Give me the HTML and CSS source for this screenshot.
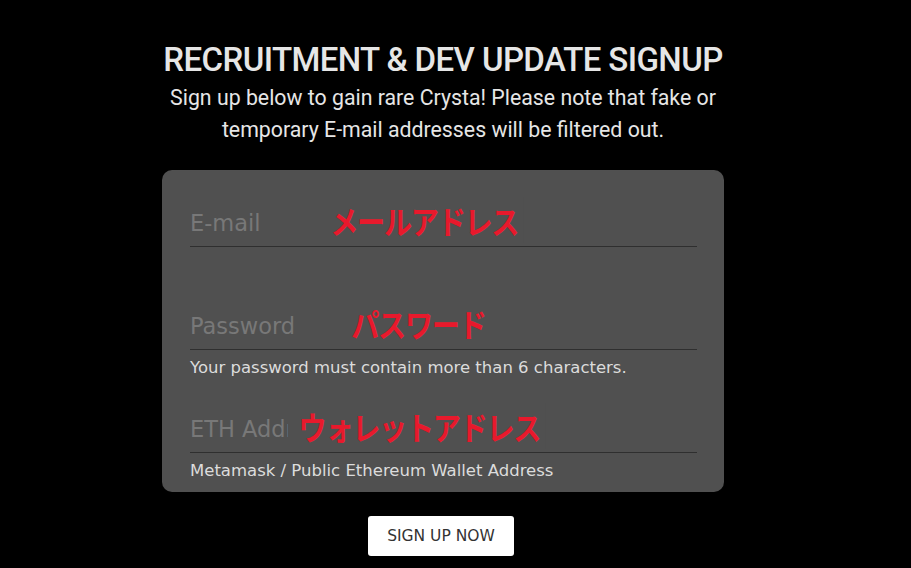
FILE: index.html
```html
<!DOCTYPE html>
<html lang="en">
<head>
    <meta charset="UTF-8">
    <meta name="viewport" content="width=device-width, initial-scale=1.0">
    <title>Signup</title>
    <link rel="stylesheet" href="styles.css">
</head>
<body>
    <div class="signup">
        <h1 class="signup-title">RECRUITMENT &amp; DEV UPDATE SIGNUP</h1>
        <p class="signup-text">Sign up below to gain rare Crysta! Please note that fake or<br>temporary E-mail addresses will be filtered out.</p>

        <form class="signup-card">
            <div class="field">
                <div class="field-input">
                    <input type="text" placeholder="E-mail">
                    <span class="note note-email">メールアドレス</span>
                </div>
                <div class="field-help"></div>
            </div>
            <div class="field">
                <div class="field-input">
                    <input type="password" placeholder="Password">
                    <span class="note note-password">パスワード</span>
                </div>
                <div class="field-help">Your password must contain more than 6 characters.</div>
            </div>
            <div class="field">
                <div class="field-input">
                    <input type="text" placeholder="ETH Address">
                    <span class="note note-eth">ウォレットアドレス</span>
                </div>
                <div class="field-help">Metamask / Public Ethereum Wallet Address</div>
            </div>
        </form>

        <button class="signup-btn">SIGN UP NOW</button>
    </div>
</body>
</html>
```

FILE: styles.css
```css
body {
    margin: 0;
    background: #000;
    font-family: 'DejaVu Sans', sans-serif;
}

.signup {
    display: flex;
    flex-direction: column;
    align-items: center;
    padding-top: 38px;
    padding-right: 25px;
}

.signup-title {
    margin: 0;
    font-family: 'Roboto', sans-serif;
    font-weight: 500;
    font-size: 33px;
    line-height: 44px;
    letter-spacing: -0.6px;
    color: #e6e6e6;
}

.signup-text {
    margin: 0;
    font-family: 'Roboto', sans-serif;
    font-weight: 400;
    font-size: 21.3px;
    line-height: 32px;
    text-align: center;
    color: #e6e6e6;
}

.signup-card {
    box-sizing: border-box;
    width: 562px;
    margin-top: 24px;
    padding: 30px 27px 10px 28px;
    background: #505050;
    border-radius: 10px;
}

.field {
    margin-bottom: 27px;
}

.field:last-child {
    margin-bottom: 0;
}

.field-input {
    position: relative;
}

.field-input input {
    box-sizing: border-box;
    display: block;
    width: 100%;
    height: 47px;
    padding: 0;
    background: transparent;
    border: none;
    border-bottom: 1px solid #2f2f2f;
    font-family: 'DejaVu Sans', sans-serif;
    font-size: 22.5px;
    color: #ddd;
    outline: none;
}

.field-input input::placeholder {
    color: #787878;
}

.field-help {
    height: 22px;
    margin-top: 7px;
    font-size: 16.5px;
    line-height: 22px;
    color: #dcdcdc;
}

.note {
    position: absolute;
    top: -3px;
    height: 46px;
    line-height: 46px;
    padding: 0 6px;
    background: #505050;
    font-family: 'Noto Sans CJK JP', sans-serif;
    font-weight: 700;
    font-size: 32px;
    letter-spacing: -1.5px;
    color: #e8192c;
    transform: scaleX(0.88);
    transform-origin: left center;
}

.note-email {
    left: 135px;
}

.note-password {
    left: 156px;
}

.note-eth {
    left: 98px;
    padding-left: 12px;
}

.signup-btn {
    width: 146px;
    height: 40px;
    margin-top: 24px;
    margin-right: 4px;
    background: #fff;
    border: none;
    border-radius: 3px;
    font-family: 'DejaVu Sans', sans-serif;
    font-size: 15.5px;
    color: #333;
    cursor: pointer;
}
```
